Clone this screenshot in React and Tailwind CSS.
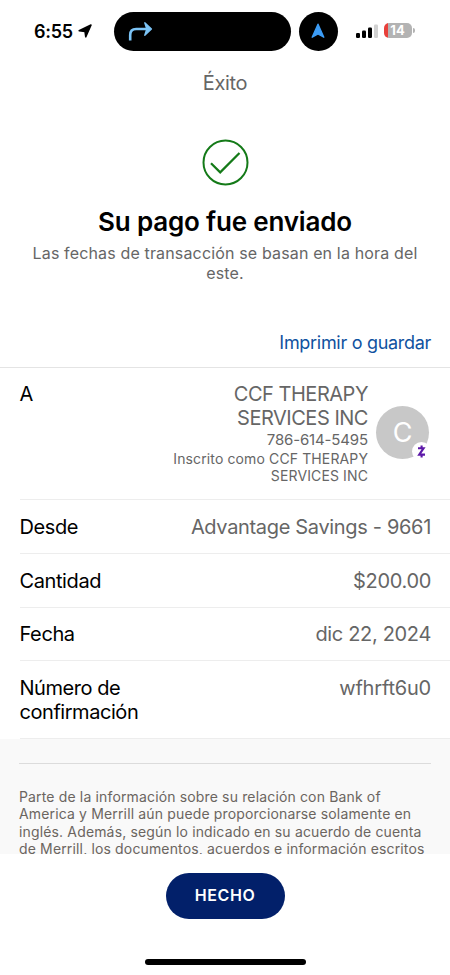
import clsx from "clsx";

const details = [
  { label: "Desde", value: "Advantage Savings - 9661", height: "h-[54px]" },
  { label: "Cantidad", value: "$200.00", height: "h-[54px]" },
  { label: "Fecha", value: "dic 22, 2024", height: "h-[53px]" },
];

const disclosure = [
  "Parte de la información sobre su relación con Bank of",
  "America y Merrill aún puede proporcionarse solamente en",
  "inglés. Además, según lo indicado en su acuerdo de cuenta",
  "de Merrill, los documentos, acuerdos e información escritos",
];

function StatusBar() {
  return (
    <header className="flex h-[62px] items-start pt-3">
      <div className="ml-[34px] flex h-[38px] w-20 items-center">
        <span className="text-[18px] font-semibold tracking-[-0.3px]">6:55</span>
        <svg className="ml-[5px]" width="14" height="14" viewBox="0 0 14 14">
          <path
            d="M13 1 7.8 12.8 7 7.4 1.2 6.8Z"
            fill="#000"
            stroke="#000"
            strokeWidth="1.6"
            strokeLinejoin="round"
          />
        </svg>
      </div>

      <div className="flex h-[38.5px] w-[177px] items-center rounded-full bg-black pl-[14px]">
        <svg width="25" height="20" viewBox="0 0 25 20">
          <path
            d="M2.2 19.6V14Q2.2 8 8.2 8H20"
            fill="none"
            stroke="#7cc4f6"
            strokeWidth="2.6"
          />
          <path
            d="M16.8 1.8 23.4 8 16.8 14.2 18.8 8Z"
            fill="#7cc4f6"
            stroke="#7cc4f6"
            strokeWidth="1.4"
            strokeLinejoin="round"
          />
        </svg>
      </div>

      <div className="ml-2 flex size-[38.5px] items-center justify-center rounded-full bg-black">
        <svg width="14" height="16" viewBox="0 0 14 16">
          <path
            d="M7 1.2 12.8 14.2 7 11 1.2 14.2Z"
            fill="#3c9cf5"
            stroke="#3c9cf5"
            strokeWidth="1.4"
            strokeLinejoin="round"
          />
        </svg>
      </div>

      <div className="ml-[18px] flex h-[37px] items-center">
        <svg width="22" height="14" viewBox="0 0 22 14">
          <rect x="0" y="9" width="4" height="5" rx="1.2" />
          <rect x="6" y="6.5" width="4" height="7.5" rx="1.2" />
          <rect x="12" y="3.5" width="4" height="10.5" rx="1.2" />
          <rect x="18" y="0.5" width="4" height="13.5" rx="1.2" fill="#d1d1d1" />
        </svg>
        <div className="ml-[6px] flex h-[15px] w-[28px] items-center justify-center rounded-[5px] bg-linear-to-r from-[#e8403a] from-[16%] to-[#b3b3b3] to-[16%]">
          <span className="text-[13px] leading-none font-bold text-white">14</span>
        </div>
        <span className="ml-px h-[5px] w-[2px] rounded-r-full bg-[#b3b3b3]" />
      </div>
    </header>
  );
}

function Avatar() {
  return (
    <div className="relative mt-6 ml-2 flex size-[53px] shrink-0 items-center justify-center rounded-full bg-[#c8c8c8]">
      <span className="text-[27px] leading-none text-white">C</span>
      <span className="absolute right-[-2px] bottom-[-2px] flex size-[19px] items-center justify-center rounded-full bg-white">
        <svg width="9" height="13" viewBox="0 0 9 13">
          <path
            d="M1 3.2H6.6L2.2 9.6H8M4.6 .4V3.2M4.6 9.6V12.6"
            fill="none"
            stroke="#5c18a8"
            strokeWidth="2.1"
          />
        </svg>
      </span>
    </div>
  );
}

export default function App() {
  return (
    <div className="flex h-[975px] w-[450px] flex-col overflow-hidden bg-white font-['Inter',sans-serif] text-black">
      <StatusBar />

      <h1 className="mt-[6px] text-center text-[20px] leading-[30px] tracking-[-0.3px] text-[#666]">Éxito</h1>

      {/* Confirmation */}
      <section className="mt-[41px] flex flex-col items-center">
        <svg width="47" height="47" viewBox="0 0 47 47" fill="none" stroke="#147a18" strokeWidth="2">
          <circle cx="23.5" cy="23.5" r="22" />
          <path d="M9 24.2 18.2 33.4 37.5 14" strokeWidth="2.2" />
        </svg>
        <h2 className="mt-[19px] text-[26px] leading-[34px] font-semibold whitespace-nowrap tracking-[-0.18px]">
          Su pago fue enviado
        </h2>
        <p className="mt-1 text-center text-[16px] leading-5 whitespace-nowrap tracking-[0.15px] text-[#666]">
          Las fechas de transacción se basan en la hora del
          <br />
          este.
        </p>
      </section>

      <div className="mt-[46px] flex h-[39px] items-start justify-end border-b border-[#e4e4e4] pr-[19px]">
        <a className="text-[18px] leading-[28px] tracking-[-0.3px] text-[#0f52a0]">Imprimir o guardar</a>
      </div>

      {/* Payment details */}
      <section className="pl-[19.5px]">
        <div className="flex h-[132px] items-start border-b border-[#ededed] pt-[14px] pr-[21px]">
          <span className="text-[20px] leading-6">A</span>
          <div className="ml-auto text-right whitespace-nowrap text-[#666]">
            <p className="text-[20px] leading-6 tracking-[-0.48px]">
              CCF THERAPY
              <br />
              SERVICES INC
            </p>
            <p className="text-[15px] leading-[20px] tracking-[-0.15px]">786-614-5495</p>
            <p className="text-[14px] leading-[17px] tracking-[0.12px]">
              Inscrito como CCF THERAPY
              <br />
              SERVICES INC
            </p>
          </div>
          <Avatar />
        </div>

        {details.map((row) => (
          <div
            key={row.label}
            className={clsx(
              "flex items-center justify-between border-b border-[#ededed] pr-[19px] text-[20px] leading-6",
              row.height,
            )}
          >
            <span className="tracking-[-0.4px]">{row.label}</span>
            <span className="tracking-[-0.33px] text-[#666]">{row.value}</span>
          </div>
        ))}

        <div className="flex h-[78px] items-start justify-between border-b border-[#ededed] pt-[15px] pr-[19px] text-[20px] leading-6">
          <span className="tracking-[-0.45px]">
            Número de
            <br />
            confirmación
          </span>
          <span className="tracking-[-0.2px] text-[#666]">wfhrft6u0</span>
        </div>
      </section>

      {/* Disclosure, cut off by the footer */}
      <section className="h-[115px] shrink-0 overflow-hidden bg-[#f9f9f9] px-[19px] pt-6">
        <hr className="border-t-[1.5px] border-[#dcdcdc]" />
        <div className="mt-[24px] text-[14px] leading-[17.3px] whitespace-nowrap tracking-[0.15px] text-[#6b6560]">
          {disclosure.map((line) => (
            <p key={line}>{line}</p>
          ))}
        </div>
      </section>

      <footer className="flex flex-1 flex-col items-center pt-[19px]">
        <button className="h-[46px] w-[119px] rounded-full bg-[#02206a] pb-[2px] text-[16px] font-semibold tracking-[0.6px] text-white">
          HECHO
        </button>
        <div className="mt-[40px] h-[6px] w-[161px] rounded-full bg-black" />
      </footer>
    </div>
  );
}
